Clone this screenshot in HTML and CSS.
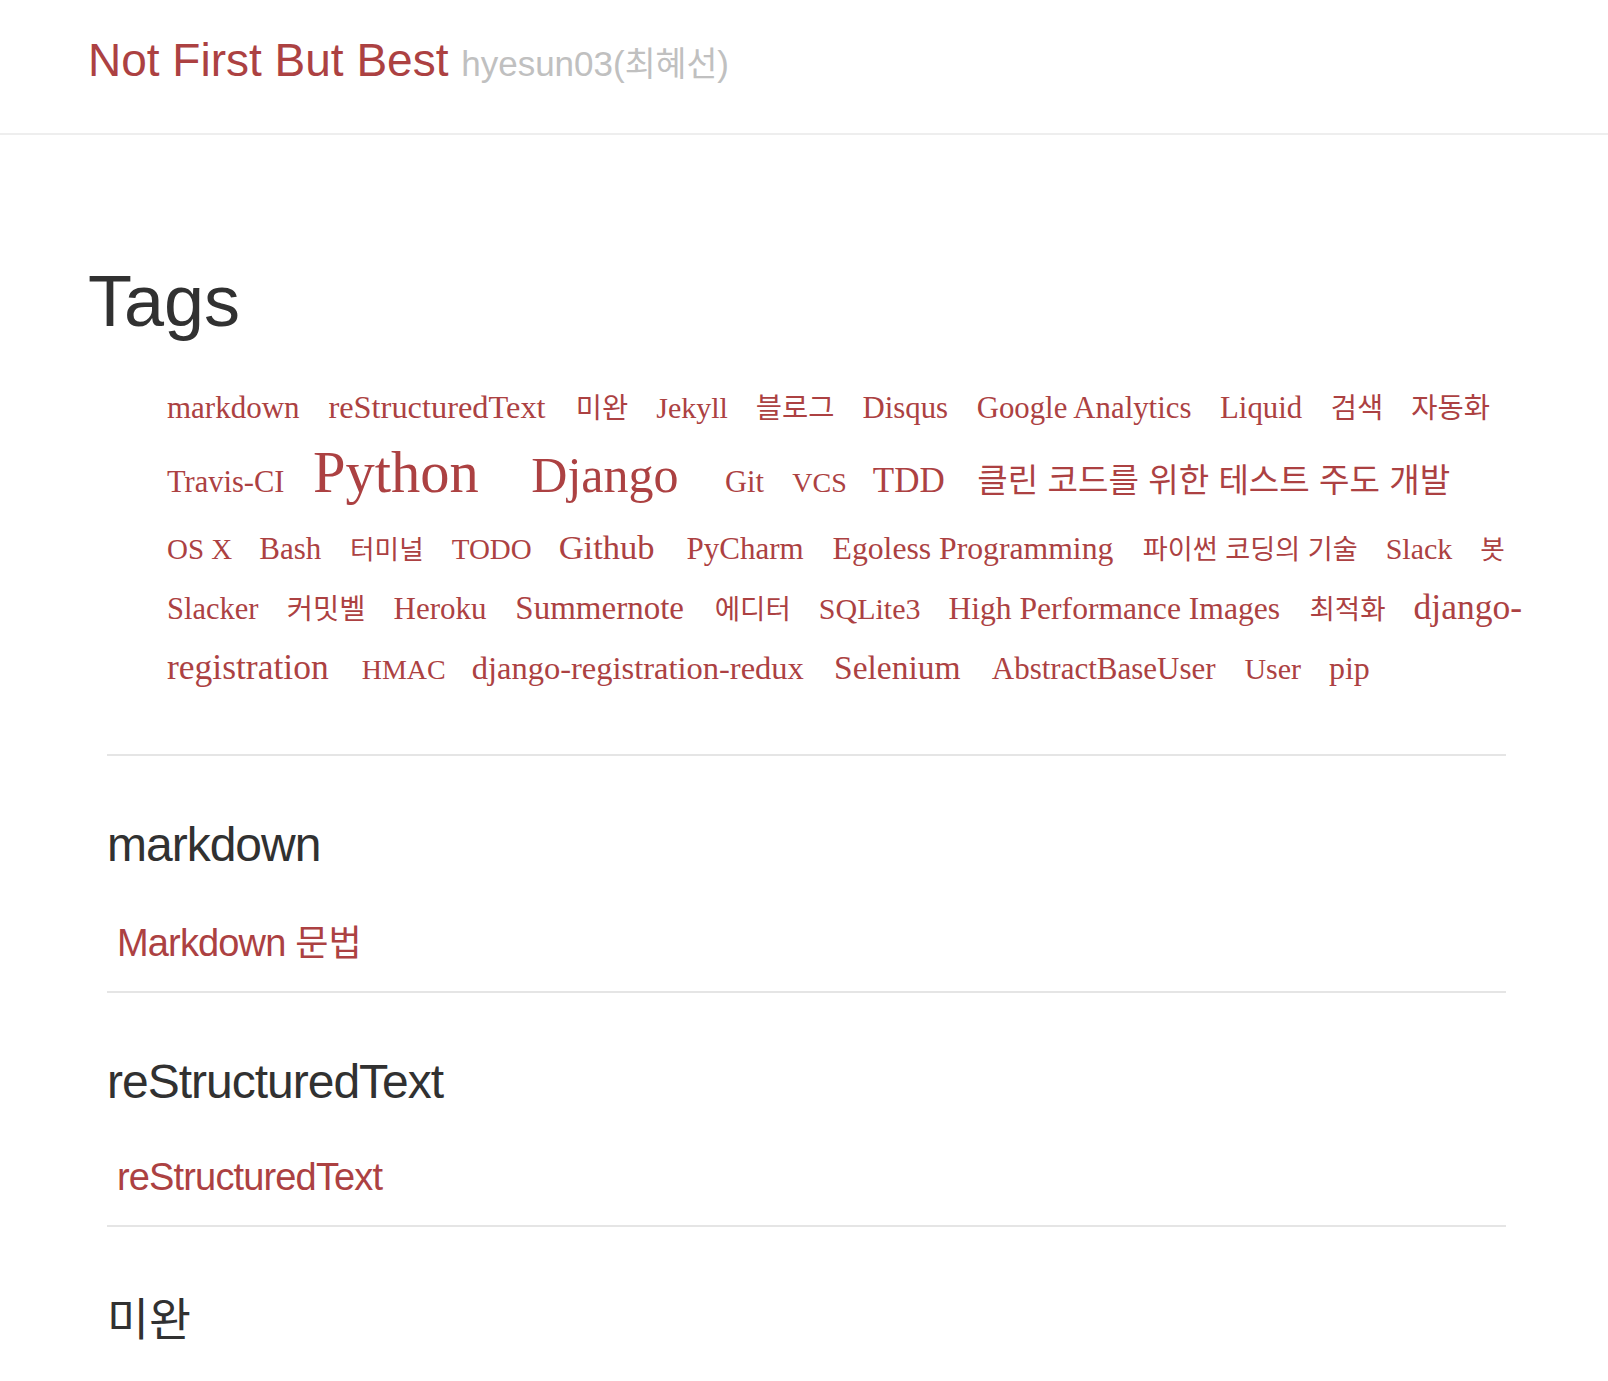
FILE: index.html
```html
<!DOCTYPE html>
<html lang="ko">
<head>
<meta charset="utf-8">
<title>Tags · Not First But Best</title>
<link rel="stylesheet" href="styles.css">
</head>
<body>
<header class="masthead">
  <h3 class="masthead-title"><a href="#">Not First But Best</a> <small>hyesun03(<span class="ko">최혜선</span>)</small></h3>
</header>
<main class="container">
  <h1 class="page-title">Tags</h1>
  <div class="cloud">
    <a href="#markdown" style="font-size:31px">markdown</a>
    <a href="#rst" style="font-size:32.4px">reStructuredText</a>
    <a href="#" class="k" style="font-size:31px"><span class="ko">미완</span></a>
    <a href="#" style="font-size:30px">Jekyll</a>
    <a href="#" class="k" style="font-size:31px"><span class="ko">블로그</span></a>
    <a href="#" style="font-size:30.8px">Disqus</a>
    <a href="#" style="font-size:30.8px">Google Analytics</a>
    <a href="#" style="font-size:30.8px">Liquid</a>
    <a href="#" class="k" style="font-size:31px"><span class="ko">검색</span></a>
    <a href="#" class="k" style="font-size:31px"><span class="ko">자동화</span></a>
    <a href="#" style="font-size:30.5px">Travis-CI</a>
    <a href="#" class="big" style="font-size:58.5px">Python</a>
    <a href="#" style="font-size:50px">Django</a>
    <a href="#" style="font-size:30.5px">Git</a>
    <a href="#" style="font-size:28px">VCS</a>
    <a href="#" style="font-size:35px">TDD</a>
    <a href="#" class="k" style="font-size:36px"><span class="ko tall">클린 코드를 위한 테스트 주도 개발</span></a>
    <a href="#" style="font-size:29px">OS X</a>
    <a href="#" style="font-size:31px">Bash</a>
    <a href="#" class="k" style="font-size:29px"><span class="ko">터미널</span></a>
    <a href="#" style="font-size:29px">TODO</a>
    <a href="#" style="font-size:34.5px">Github</a>
    <a href="#" style="font-size:31px">PyCharm</a>
    <a href="#" style="font-size:31.7px">Egoless Programming</a>
    <a href="#" class="k" style="font-size:29.5px"><span class="ko">파이썬 코딩의 기술</span></a>
    <a href="#" style="font-size:30px">Slack</a>
    <a href="#" class="k" style="font-size:29px"><span class="ko">봇</span></a>
    <a href="#" style="font-size:30.5px">Slacker</a>
    <a href="#" class="k" style="font-size:31px"><span class="ko">커밋벨</span></a>
    <a href="#" style="font-size:31px">Heroku</a>
    <a href="#" style="font-size:33px">Summernote</a>
    <a href="#" class="k" style="font-size:30px"><span class="ko">에디터</span></a>
    <a href="#" style="font-size:30px">SQLite3</a>
    <a href="#" style="font-size:31.6px">High Performance Images</a>
    <a href="#" class="k" style="font-size:30px"><span class="ko">최적화</span></a>
    <a href="#" class="wrap" style="font-size:35.5px">django-registration</a>
    <a href="#" style="font-size:28px">HMAC</a>
    <a href="#" style="font-size:32.5px">django-registration-redux</a>
    <a href="#" style="font-size:33.5px">Selenium</a>
    <a href="#" style="font-size:31px">AbstractBaseUser</a>
    <a href="#" style="font-size:30px">User</a>
    <a href="#" style="font-size:32px">pip</a>
  </div>
  <div class="sections">
    <section class="tag-group" id="markdown">
      <hr>
      <h2>markdown</h2>
      <ul class="posts">
        <li><a href="#">Markdown <span class="ko">문법</span></a></li>
      </ul>
    </section>
    <section class="tag-group" id="rst">
      <hr>
      <h2>reStructuredText</h2>
      <ul class="posts">
        <li><a href="#">reStructuredText</a></li>
      </ul>
    </section>
    <section class="tag-group">
      <hr>
      <h2><span class="ko">미완</span></h2>
      <ul class="posts">
        <li><a href="#"><span class="ko">미완</span></a></li>
      </ul>
    </section>
  </div>
</main>
</body>
</html>
```
FILE: styles.css
```css
* {
  box-sizing: border-box;
}

html,
body {
  background: #fff;
}

body {
  margin: 0;
  color: #313131;
  font-family: "Liberation Sans", "Noto Sans CJK KR", sans-serif;
}

.ko {
  font-family: "Noto Sans CJK KR", sans-serif;
}

/* Masthead */
.masthead {
  height: 135px;
  padding: 32px 88px 0;
  border-bottom: 2px solid #eee;
}

.masthead-title {
  margin: 0;
  font-family: "Liberation Sans", "Noto Sans CJK KR", sans-serif;
  font-size: 46px;
  font-weight: 400;
  line-height: 57.5px;
}

.masthead-title a {
  color: #ac4142;
  text-decoration: none;
}

.masthead-title small {
  font-size: 35px;
  color: #c0c0c0;
}

.masthead-title small .ko {
  font-size: 0.96em;
}

/* Page */
.container {
  padding: 0 48px 0 88px;
}

.page-title {
  margin: 124px 0 0;
  font-family: "Liberation Sans", sans-serif;
  font-size: 72px;
  font-weight: 400;
  line-height: 85px;
  letter-spacing: 0;
  color: #313131;
}

/* Tag cloud */
.cloud {
  margin: 33px 0 0;
  padding-left: 79px;
  font-family: "Liberation Serif", "Noto Sans CJK KR", serif;
  font-size: 31px;
  line-height: 58px;
  word-spacing: -0.25em;
}

.cloud a {
  color: #ac4142;
  text-decoration: none;
  word-spacing: normal;
  white-space: nowrap;
  margin-right: 0.93em;
}

.cloud a.k {
  margin-right: 28px;
}

.cloud a.wrap {
  white-space: normal;
}

.cloud .ko {
  font-size: 0.92em;
}

.cloud .big {
  line-height: 72px;
  margin-right: 0.9em;
}

.cloud .tall {
  line-height: 79px;
}

/* Tag sections */
.sections {
  margin: 55px 54px 0 19px;
}

.tag-group hr {
  margin: 0;
  height: 0;
  border: 0;
  border-top: 2px solid #e5e5e5;
}

.tag-group h2 {
  margin: 57px 0 0;
  font-family: "Liberation Sans", sans-serif;
  font-size: 48px;
  font-weight: 400;
  line-height: 64px;
  letter-spacing: -1px;
  color: #313131;
}

.tag-group h2 .ko {
  font-size: 0.95em;
  letter-spacing: 0;
}

.posts {
  list-style: none;
  margin: 31px 0 16px;
  padding-left: 10px;
  font-family: "Liberation Sans", sans-serif;
  font-size: 38px;
  line-height: 64px;
  letter-spacing: -0.85px;
}

.posts a {
  color: #ac4142;
  text-decoration: none;
}

.posts .ko {
  font-size: 0.95em;
  letter-spacing: 0;
}
```
